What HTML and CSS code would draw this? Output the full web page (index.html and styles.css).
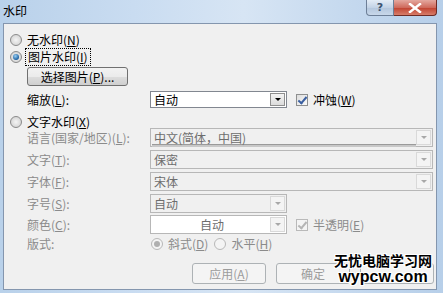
FILE: index.html
```
<!DOCTYPE html>
<html lang="zh-CN">
<head>
    <meta charset="UTF-8">
    <title>水印</title>
    <link rel="stylesheet" href="styles.css">
</head>
<body>
    <div class="window">
        <div class="titlebar">
            <span class="title">水印</span>
            <div class="caption-btns">
                <span class="btn-help">?</span>
                <span class="btn-close">
                    <svg width="14" height="10" viewBox="0 0 14 10"><path d="M2 1 L12 9 M12 1 L2 9" stroke="#fff" stroke-width="2.4" stroke-linecap="square"/></svg>
                </span>
            </div>
        </div>

        <div class="client">
            <!-- 无水印 -->
            <div class="row row-radio">
                <span class="radio"></span>
                <span class="lbl">无水印(<u>N</u>)</span>
            </div>

            <!-- 图片水印 -->
            <div class="row row-radio">
                <span class="radio checked"></span>
                <span class="lbl focus">图片水印(<u>I</u>)</span>
            </div>

            <div class="row row-btn">
                <span class="button pick-btn">选择图片(<u>P</u>)...</span>
            </div>

            <div class="row field row-scale">
                <span class="field-lbl">缩放(<u>L</u>):</span>
                <div class="combo combo-sm enabled">
                    <span class="combo-text">自动</span>
                    <span class="drop"><i class="arrow"></i></span>
                </div>
                <span class="check checked"></span>
                <span class="lbl">冲蚀(<u>W</u>)</span>
            </div>

            <!-- 文字水印 -->
            <div class="row row-radio row-text-wm">
                <span class="radio"></span>
                <span class="lbl">文字水印(<u>X</u>)</span>
            </div>

            <div class="row field disabled first-field">
                <span class="field-lbl">语言(国家/地区)(<u>L</u>):</span>
                <div class="combo combo-lg">
                    <span class="combo-text underline">中文(简体，中国)</span>
                    <span class="drop"><i class="arrow"></i></span>
                </div>
            </div>

            <div class="row field disabled">
                <span class="field-lbl">文字(<u>T</u>):</span>
                <div class="combo combo-lg">
                    <span class="combo-text">保密</span>
                    <span class="drop"><i class="arrow"></i></span>
                </div>
            </div>

            <div class="row field disabled">
                <span class="field-lbl">字体(<u>F</u>):</span>
                <div class="combo combo-lg">
                    <span class="combo-text">宋体</span>
                    <span class="drop"><i class="arrow"></i></span>
                </div>
            </div>

            <div class="row field disabled">
                <span class="field-lbl">字号(<u>S</u>):</span>
                <div class="combo combo-sm">
                    <span class="combo-text">自动</span>
                    <span class="drop"><i class="arrow"></i></span>
                </div>
            </div>

            <div class="row field disabled row-color">
                <span class="field-lbl">颜色(<u>C</u>):</span>
                <div class="combo combo-sm white">
                    <span class="combo-text center">自动</span>
                    <span class="drop"><i class="arrow"></i></span>
                </div>
                <span class="check checked dim"></span>
                <span class="lbl">半透明(<u>E</u>)</span>
            </div>

            <div class="row field disabled row-layout">
                <span class="field-lbl">版式:</span>
                <span class="radio checked dim"></span>
                <span class="lbl">斜式(<u>D</u>)</span>
                <span class="radio dim gap"></span>
                <span class="lbl">水平(<u>H</u>)</span>
            </div>

            <div class="row row-actions">
                <span class="button dim">应用(<u>A</u>)</span>
                <span class="button dim">确定</span>
                <span class="button dim"></span>
            </div>
        </div>

        <div class="site-mark">
            <span class="mark-cn">无忧电脑学习网</span>
            <span class="mark-en">wypcw.com</span>
        </div>
    </div>
</body>
</html>
```

FILE: styles.css
```
* {
    box-sizing: border-box;
}

body {
    margin: 0;
    padding: 0;
    width: 443px;
    height: 293px;
    overflow: hidden;
    font-family: "Noto Sans CJK SC", "DejaVu Sans", sans-serif;
    font-size: 12px;
    color: #000;
}

u {
    text-decoration: underline;
    text-underline-offset: 1px;
}

.window {
    position: relative;
    width: 443px;
    height: 293px;
    background: linear-gradient(90deg, #b9d1ea 0%, #c9dcf1 30%, #d7e5f4 55%, #c4d8ee 80%, #b7cfe9 100%);
    padding: 0 6px 3px 3px;
    display: flex;
    flex-direction: column;
}

/* barra de titulo */
.titlebar {
    height: 23px;
    flex: none;
    display: flex;
    align-items: flex-start;
    justify-content: space-between;
}

.title {
    font-size: 12px;
    line-height: 12px;
    margin-top: 5px;
    color: #000;
}

.caption-btns {
    display: flex;
}

.btn-help {
    width: 28px;
    height: 16px;
    border: 1px solid #6d7f97;
    border-top: none;
    border-radius: 0 0 0 4px;
    background: linear-gradient(#e3ecf6, #c3d3e6 50%, #b3c6dd 51%, #c8d8ea);
    color: #3c5370;
    font-family: "DejaVu Sans", sans-serif;
    font-weight: bold;
    font-size: 11px;
    line-height: 15px;
    text-align: center;
}

.btn-close {
    width: 43px;
    height: 16px;
    border: 1px solid #6e2b25;
    border-top: none;
    border-left: none;
    border-radius: 0 0 4px 0;
    background: linear-gradient(#e4a89f, #cf6a5c 50%, #c0412f 51%, #d77d6a);
    display: flex;
    align-items: center;
    justify-content: center;
}

/* area cliente */
.client {
    flex: 1;
    background: #f0f0f0;
    border: 1px solid #8496ae;
    padding: 7px 0 0 5px;
    display: flex;
    flex-direction: column;
}

.row {
    display: flex;
    align-items: center;
    flex: none;
}

.row-radio {
    height: 17px;
}

.lbl {
    line-height: 14px;
    white-space: nowrap;
}

.focus {
    outline: 1px dotted #000;
    outline-offset: 1px;
    padding: 0 1px;
}

.radio {
    width: 12px;
    height: 12px;
    border-radius: 50%;
    border: 1px solid #8a8a8a;
    background: radial-gradient(circle at 50% 50%, #f4f4f4 0, #dcdcdc 60%, #cfcfcf 100%);
    margin: 0 5px 0 1px;
    flex: none;
    position: relative;
}

.radio.checked::after {
    content: "";
    position: absolute;
    left: 2px;
    top: 2px;
    width: 6px;
    height: 6px;
    border-radius: 50%;
    background: radial-gradient(circle at 40% 35%, #9ad0f5, #1b5f9e 70%);
}

.radio.dim {
    border-color: #b8b8b8;
    background: #f4f4f4;
}

.radio.dim.checked::after {
    background: #b0b0b0;
}

.row-btn {
    margin-top: 2px;
    padding-left: 18px;
}

.button {
    height: 19px;
    border: 1px solid #707070;
    border-radius: 3px;
    background: linear-gradient(#f2f2f2, #ebebeb 50%, #dddddd 51%, #cfcfcf);
    line-height: 17px;
    text-align: center;
}

.pick-btn {
    width: 101px;
}

.field {
    height: 19px;
    padding-left: 18px;
}

.field-lbl {
    width: 123px;
    flex: none;
    white-space: nowrap;
}

.disabled .field-lbl,
.disabled .lbl {
    color: #8b8b8b;
}

.row-scale {
    margin-top: 5px;
    height: 17px;
}

.combo {
    height: 19px;
    border: 1px solid #b7b7b7;
    background: #f0f0f0;
    display: flex;
    flex: none;
    padding: 1px;
}

.combo-sm {
    width: 137px;
}

.combo-lg {
    width: 283px;
}

.combo-text {
    flex: 1;
    padding-left: 2px;
    line-height: 15px;
    color: #6d6d6d;
    white-space: nowrap;
}

.combo-text.center {
    text-align: center;
}

.combo-text.underline {
    border-bottom: 1px solid #9a9a9a;
    box-shadow: 0 2px 0 #c8c8c8;
}

.combo.white {
    background: #fff;
}

.drop {
    width: 15px;
    flex: none;
    border: 1px solid #d9d9d9;
    background: #f4f4f4;
    display: flex;
    align-items: center;
    justify-content: center;
}

.arrow {
    width: 0;
    height: 0;
    border-left: 3px solid transparent;
    border-right: 3px solid transparent;
    border-top: 3px solid #a8a8a8;
}

.combo.enabled {
    height: 17px;
    border-color: #828790;
    background: #fff;
}

.combo.enabled .combo-text {
    color: #000;
    line-height: 13px;
}

.combo.enabled .drop {
    border-color: #8f8f8f;
    background: linear-gradient(#f3f3f3, #dcdcdc);
}

.combo.enabled .arrow {
    border-top-color: #000;
}

.check {
    width: 12px;
    height: 12px;
    border: 1px solid #8e8f8f;
    background: linear-gradient(135deg, #dcdcdc, #fbfbfb);
    margin: 0 5px 0 9px;
    flex: none;
    position: relative;
}

.check.checked::after {
    content: "";
    position: absolute;
    left: 3px;
    top: 0px;
    width: 3px;
    height: 7px;
    border: solid #3a5fa0;
    border-width: 0 2px 2px 0;
    transform: rotate(40deg);
}

.check.dim {
    border-color: #b9b9b9;
    background: #f4f4f4;
}

.check.dim.checked::after {
    border-color: #b5b5b5;
}

.row-text-wm {
    margin-top: 5px;
}

.first-field {
    margin-top: -2px;
}

.disabled + .disabled {
    margin-top: 3px;
}

.row-color {
    margin-top: 2px !important;
}

.row-layout {
    height: 17px;
    margin-top: 1px !important;
}

.row-layout .radio {
    margin: 0 5px 0 1px;
}

.row-layout .radio.gap {
    margin-left: 6px;
}

.row-actions {
    margin-top: 11px;
    padding-left: 183px;
    gap: 10px;
}

.row-actions .button {
    width: 74px;
    height: 21px;
    line-height: 19px;
}

.button.dim {
    color: #9c9c9c;
    border-color: #adb2b5;
    background: #f4f4f4;
}

/* marca del sitio */
.site-mark {
    position: absolute;
    left: 333px;
    top: 252px;
    width: 100px;
    display: flex;
    flex-direction: column;
    align-items: center;
    font-weight: bold;
    color: #000;
    text-shadow: -1px -1px 0 #fff, 1px -1px 0 #fff, -1px 1px 0 #fff, 1px 1px 0 #fff, 0 1px 0 #fff, 0 -1px 0 #fff, 1px 0 0 #fff, -1px 0 0 #fff;
}

.mark-cn {
    font-size: 14px;
    line-height: 16px;
}

.mark-en {
    font-family: "Liberation Sans", sans-serif;
    font-size: 16px;
    line-height: 16px;
    margin-top: 1px;
}
```
